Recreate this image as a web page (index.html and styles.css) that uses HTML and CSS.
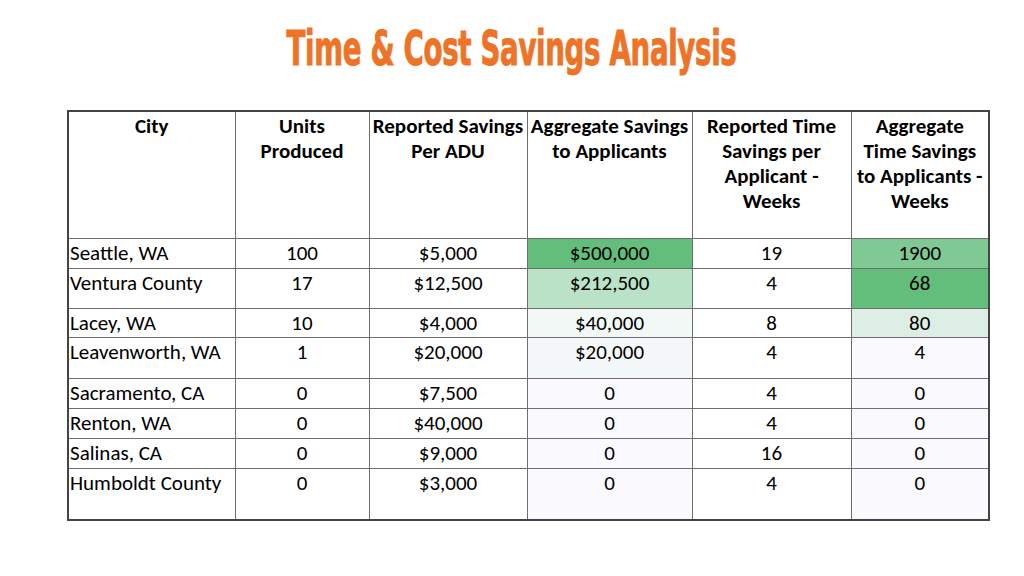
FILE: index.html
```html
<!DOCTYPE html>
<html lang="en">
<head>
<meta charset="utf-8">
<title>Time &amp; Cost Savings Analysis</title>
<link rel="stylesheet" href="styles.css">
</head>
<body>
<div class="slide">
  <h1 class="title"><span class="title-text">Time &amp; Cost Savings Analysis</span></h1>
  <table class="data">
    <colgroup>
      <col class="c-city"><col class="c-units"><col class="c-per"><col class="c-agg"><col class="c-time"><col class="c-aggt">
    </colgroup>
    <thead>
      <tr class="r-head">
        <th>City</th>
        <th>Units<br>Produced</th>
        <th>Reported Savings<br>Per ADU</th>
        <th>Aggregate Savings<br>to Applicants</th>
        <th>Reported Time<br>Savings per<br>Applicant -<br>Weeks</th>
        <th>Aggregate<br>Time Savings<br>to Applicants -<br>Weeks</th>
      </tr>
    </thead>
    <tbody>
      <tr class="r-s">
        <td class="city">Seattle, WA</td><td>100</td><td>$5,000</td><td class="g1">$500,000</td><td>19</td><td class="t2">1900</td>
      </tr>
      <tr class="r-l">
        <td class="city">Ventura County</td><td>17</td><td>$12,500</td><td class="g2">$212,500</td><td>4</td><td class="g1">68</td>
      </tr>
      <tr class="r-xs">
        <td class="city">Lacey, WA</td><td>10</td><td>$4,000</td><td class="g3">$40,000</td><td>8</td><td class="t3">80</td>
      </tr>
      <tr class="r-xl">
        <td class="city">Leavenworth, WA</td><td>1</td><td>$20,000</td><td class="g4">$20,000</td><td>4</td><td class="z">4</td>
      </tr>
      <tr class="r-s">
        <td class="city">Sacramento, CA</td><td>0</td><td>$7,500</td><td class="z">0</td><td>4</td><td class="z">0</td>
      </tr>
      <tr class="r-s">
        <td class="city">Renton, WA</td><td>0</td><td>$40,000</td><td class="z">0</td><td>4</td><td class="z">0</td>
      </tr>
      <tr class="r-s">
        <td class="city">Salinas, CA</td><td>0</td><td>$9,000</td><td class="z">0</td><td>16</td><td class="z">0</td>
      </tr>
      <tr class="r-last">
        <td class="city">Humboldt County</td><td>0</td><td>$3,000</td><td class="z">0</td><td>4</td><td class="z">0</td>
      </tr>
    </tbody>
  </table>
</div>
</body>
</html>
```

FILE: styles.css
```css
html, body {
  margin: 0;
  padding: 0;
  background: #ffffff;
}

.slide {
  width: 1024px;
  height: 576px;
  display: flex;
  flex-direction: column;
  align-items: flex-start;
}

.title {
  margin: 0;
  width: 100%;
  height: 110px;
  box-sizing: border-box;
  padding-top: 20px;
  text-align: center;
  font-family: "DejaVu Sans Condensed", "DejaVu Sans", sans-serif;
  font-weight: 700;
  font-size: 48px;
  line-height: 56px;
  color: #ef7326;
}

.title-text {
  display: inline-block;
  transform: scaleX(0.64);
  letter-spacing: -0.5px;
  -webkit-text-stroke: 1px #ef7326;
}

.data {
  margin-left: 67px;
  width: 921px;
  border-collapse: collapse;
  table-layout: fixed;
  font-family: Carlito, Lato, "Liberation Sans", sans-serif;
  font-size: 21px;
  line-height: 25px;
  color: #000000;
  border: 2px solid #444444;
}

.c-city { width: 167px; }
.c-units { width: 134px; }
.c-per { width: 158px; }
.c-agg { width: 165px; }
.c-time { width: 159px; }
.c-aggt { width: 138px; }

.data th,
.data td {
  border: 1px solid #6e6e6e;
  padding: 2px 0 0;
  vertical-align: top;
  text-align: center;
  white-space: nowrap;
  overflow: hidden;
}

.data th {
  font-weight: 700;
}

.data td.city {
  text-align: left;
  padding-left: 1px;
}

.r-head { height: 127px; }
.r-s { height: 30px; }
.r-xs { height: 29px; }
.r-l { height: 40px; }
.r-xl { height: 41px; }
.r-last { height: 52px; }

.g1 { background: #63be7b; }
.g2 { background: #b9e2c6; }
.g3 { background: #f1f8f5; }
.g4 { background: #f5f8f9; }
.t2 { background: #7fc994; }
.t3 { background: #ddeee4; }
.z { background: #fafafe; }
```
